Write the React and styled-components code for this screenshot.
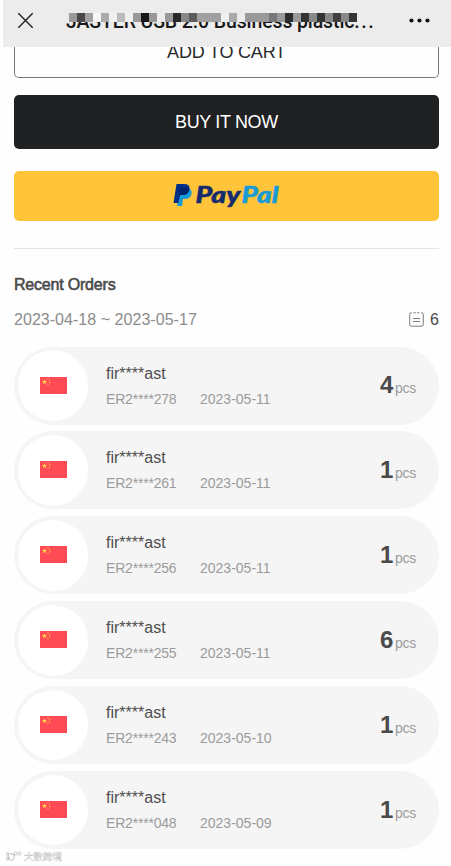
import React from "react";
import styled, { createGlobalStyle } from "styled-components";

const orders = [
  { id: "ER2****278", date: "2023-05-11", count: 4 },
  { id: "ER2****261", date: "2023-05-11", count: 1 },
  { id: "ER2****256", date: "2023-05-11", count: 1 },
  { id: "ER2****255", date: "2023-05-11", count: 6 },
  { id: "ER2****243", date: "2023-05-10", count: 1 },
  { id: "ER2****048", date: "2023-05-09", count: 1 },
];

// one entry per 8px block of the censor strip
const blocks =
  "9a 48 a0 f6 aa f0 bb f0 99 18 99 ec 99 28 88 5c a0 a0 a0 f0 aa ec 99 99 99 77 99 2c 99 34 88 34 88 40 88 34".split(
    " "
  );

const GlobalStyle = createGlobalStyle`
  * {
    box-sizing: border-box;
  }

  body {
    margin: 0;
    background: #fff;
    font-family: "Liberation Sans", Arial, sans-serif;
  }
`;

const Page = styled.div`
  position: relative;
  width: 451px;
  height: 866px;
  overflow: hidden;
  background: #fefefe;
`;

const Header = styled.header`
  position: relative;
  z-index: 1;
  display: flex;
  align-items: center;
  height: 47px;
  margin-left: 3px;
  padding: 0 21px 6px 14px;
  background: #ececec;
`;

const Title = styled.div`
  flex: 1;
  margin-left: 32px;
  padding-top: 3px;
  white-space: nowrap;
  font-family: Roboto, sans-serif;
  font-size: 19.5px;
  font-weight: 500;
  line-height: 24px;
  letter-spacing: -0.12px;
  color: #191919;
`;

const Dots = styled.span`
  letter-spacing: 1.6px;
`;

const Mosaic = styled.div`
  position: absolute;
  left: 66px;
  top: 13px;
  display: flex;
  height: 9px;
`;

const Block = styled.span`
  width: 8px;
  background: ${({ tone }) => `#${tone}${tone}${tone}`};
`;

const Content = styled.main`
  padding: 0 12px 0 14px;
`;

const Button = styled.div`
  display: flex;
  align-items: center;
  justify-content: center;
  height: ${({ height }) => height}px;
  border-radius: 5px;
  font-size: 18px;
`;

const CartButton = styled(Button)`
  border: 1px solid #77787a;
  border-top: 0;
  border-radius: 0 0 5px 5px;
  padding-bottom: 19px;
  letter-spacing: -0.2px;
  color: #292a2c;
`;

const BuyButton = styled(Button)`
  margin-top: 16.6px;
  padding-top: 1px;
  background: #202123;
  letter-spacing: -0.35px;
  color: #fff;
`;

const PayPalButton = styled(Button)`
  margin-top: 22px;
  background: #ffc43a;
`;

const Divider = styled.hr`
  height: 1px;
  margin: 27px 0 0;
  border: 0;
  background: #e4e4e4;
`;

const Heading = styled.h2`
  margin: 26px 0 0;
  font-size: 16px;
  font-weight: 400;
  line-height: 20px;
  letter-spacing: -0.2px;
  color: #4a4a4a;
  -webkit-text-stroke: 0.6px #4a4a4a;
`;

const Summary = styled.div`
  display: flex;
  align-items: center;
  justify-content: space-between;
  height: 20px;
  margin-top: 15px;
  font-size: 16px;
  letter-spacing: 0.04px;
  color: #8c8c8c;
`;

const Total = styled.div`
  display: flex;
  align-items: center;
  gap: 6px;
  color: #4a4a4a;
`;

const List = styled.div`
  display: flex;
  flex-direction: column;
  gap: 6.9px;
  margin-top: 17px;
`;

const Row = styled.div`
  display: flex;
  align-items: center;
  height: 78px;
  padding: 0 23px 0 3.5px;
  border-radius: 39px;
  background: #f5f5f5;
`;

const Avatar = styled.div`
  display: flex;
  align-items: center;
  justify-content: center;
  width: 70.5px;
  height: 70.5px;
  padding: 0 0 1px 1px;
  border-radius: 50%;
  background: #fff;
`;

const Info = styled.div`
  flex: 1;
  margin-left: 18px;
`;

const Name = styled.div`
  font-size: 16px;
  line-height: 20px;
  color: #4e4e4e;
`;

const Meta = styled.div`
  display: flex;
  margin-top: 6px;
  font-size: 14px;
  line-height: 18px;
  color: #9b9b9b;
`;

const OrderId = styled.span`
  width: 94px;
  letter-spacing: -0.2px;
`;

const Quantity = styled.div`
  display: flex;
  align-items: baseline;
  gap: 2px;
  padding-bottom: 1px;
  font-size: 14px;
  letter-spacing: -0.3px;
  color: #9b9b9b;

  strong {
    font-size: 24px;
    color: #4a4a4a;
  }
`;

const Watermark = styled.div`
  position: absolute;
  left: 6px;
  bottom: 3px;
  display: flex;
  align-items: center;
  gap: 2px;
  font-family: "Noto Sans CJK SC", sans-serif;
  font-size: 9.5px;
  line-height: 14px;
  color: #fff;
  -webkit-text-stroke: 0.4px #c2c2c2;
`;

const Flag = () => (
  <svg width="27" height="17" viewBox="0 0 27 17">
    <rect width="27" height="17" fill="#ff4b55" />
    <path
      d="M4.500 2.300l.8 1.800h1.800L5.600 5.300l.6 1.900-1.700-1.100-1.700 1.100.6-1.900-1.500-1.200h1.800z"
      fill="#ffd34a"
    />
    <g fill="#ffbd4a">
      <circle cx="8" cy="1.8" r=".7" />
      <circle cx="9.7" cy="3.5" r=".7" />
      <circle cx="9.7" cy="5.7" r=".7" />
      <circle cx="8" cy="7.4" r=".7" />
    </g>
  </svg>
);

const PayPalLogo = () => (
  <svg width="108" height="40" viewBox="0 -6 108 40">
    <path d="M7 6h7.500q5 1 4 6-1 5-7 5H10l-1 7H4z" fill="#179bd7" />
    <path d="M3.500 2H11q6 0 5.500 5-.8 6-7 6H6.700L5.500 21H.5z" fill="#003087" />
    <path
      d="M6.500 7q.3-1.300 1.600-1.300h5.500q2 0 2.800.8-.6 6.500-7 6.500H6.800L5.700 19z"
      fill="#00236b"
    />
    <g
      fontFamily="Lato"
      fontSize="23"
      fontWeight="900"
      fontStyle="italic"
      strokeWidth=".5"
    >
      <text
        x="22.500"
        y="20.500"
        textLength="45"
        lengthAdjust="spacingAndGlyphs"
        fill="#142c6e"
        stroke="#142c6e"
      >
        Pay
      </text>
      <text
        x="68.500"
        y="20.500"
        textLength="37"
        lengthAdjust="spacingAndGlyphs"
        fill="#179bd7"
        stroke="#179bd7"
      >
        Pal
      </text>
    </g>
  </svg>
);

const App = () => (
  <Page>
    <GlobalStyle />
    <Header>
      <svg width="17" height="17" viewBox="0 0 17 17" stroke="#222" strokeWidth="1.4">
        <path d="M1.300 1.300l14.400 14.400M15.700 1.300L1.300 15.700" />
      </svg>
      <Title>
        JASTER USB 2.0 Business plastic<Dots>...</Dots>
      </Title>
      <svg width="21" height="5" viewBox="0 0 21 5" fill="#111">
        <circle cx="2.5" cy="2.5" r="2.1" />
        <circle cx="10.5" cy="2.5" r="2.1" />
        <circle cx="18.5" cy="2.5" r="2.1" />
      </svg>
      <Mosaic>
        {blocks.map((tone, i) => (
          <Block key={i} tone={tone} />
        ))}
      </Mosaic>
    </Header>
    <Content>
      <CartButton height={31}>ADD TO CART</CartButton>
      <BuyButton height={54}>BUY IT NOW</BuyButton>
      <PayPalButton height={50}>
        <PayPalLogo />
      </PayPalButton>
      <Divider />
      <Heading>Recent Orders</Heading>
      <Summary>
        <span>2023-04-18 ~ 2023-05-17</span>
        <Total>
          <svg width="15" height="15" viewBox="0 0 15 15" fill="none" stroke="#7c7c7c">
            <path d="M3 .8H2.200Q.7.8.7 2.300v10.400q0 1.500 1.500 1.500h10.600q1.500 0 1.500-1.500V2.300q0-1.500-1.500-1.500H12M4.500.8h2.300M8.200.8h2.300M4 6.500h7M4 9.500h7" />
          </svg>
          6
        </Total>
      </Summary>
      <List>
        {orders.map((order) => (
          <Row key={order.id}>
            <Avatar>
              <Flag />
            </Avatar>
            <Info>
              <Name>fir****ast</Name>
              <Meta>
                <OrderId>{order.id}</OrderId>
                <span>{order.date}</span>
              </Meta>
            </Info>
            <Quantity>
              <strong>{order.count}</strong>
              pcs
            </Quantity>
          </Row>
        ))}
      </List>
    </Content>
    <Watermark>
      <svg width="16" height="11" viewBox="0 0 16 11" fill="none" stroke="#b5b5b5" strokeWidth=".8">
        <path d="M1 2v7h1.500V2zM4 3q0-1 1-1l1 2 2-1v4q-1 3-3 2.500-2-.5-1-3.500" />
        <circle cx="9.5" cy="2.5" r="1.5" />
        <circle cx="13.5" cy="2.5" r="1.5" />
      </svg>
      大数跨境
    </Watermark>
  </Page>
);

export default App;
